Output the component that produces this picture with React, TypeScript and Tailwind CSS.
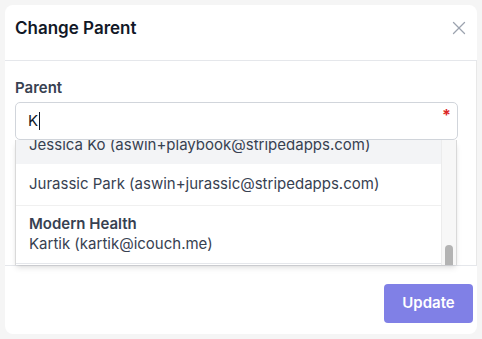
import { X } from 'lucide-react';

const font = { fontFamily: 'Inter, "Noto Sans", sans-serif' };

export default function App() {
  return (
    <div className="h-[339px] w-[482px] bg-[#f5f5f5] p-[5px]" style={font}>
      <div className="flex h-[329px] w-[472px] flex-col overflow-hidden rounded-lg bg-white">
        {/* header */}
        <div className="flex h-[56px] shrink-0 items-start justify-between border-b border-[#e5e7eb] pl-[10px] pr-[7px] pt-[11px]">
          <h2 className="text-[17px] font-semibold leading-[24px] text-[#111827]">Change Parent</h2>
          <X className="mt-[1px] h-[22px] w-[22px] text-[#9ca3af]" strokeWidth={1.4} />
        </div>

        {/* body */}
        <div className="relative h-[204px] shrink-0 border-r border-[#e8e8e8] pl-[10px] pr-[18px]">
          <label className="mt-[17px] block text-[15px] font-semibold leading-[20px] text-[#374151]">Parent</label>
          <div className="relative mt-[4px] flex h-[38px] items-center rounded-[5px] border border-[#d1d5db] px-[12px]">
            <span className="text-[15px] text-[#111827]">K</span>
            <span className="ml-[1px] h-[18px] w-px bg-[#111827]" />
            <span className="absolute right-[6px] top-[4px] text-[16px] font-bold leading-none text-[#dc2626]">*</span>
          </div>

          {/* dropdown */}
          <div className="absolute left-[10px] top-[79px] flex h-[125px] w-[442px] border-x border-[#d9d9d9] bg-white shadow-md">
            <div className="flex-1 overflow-hidden text-[15px] text-[#374151]">
              <div className="-mt-[14px] flex h-[38px] items-center bg-[#f3f4f6] px-[13px]">
                Jessica Ko (aswin+playbook@stripedapps.com)
              </div>
              <div className="flex h-[42px] items-center border-b border-[#f0f0f0] px-[13px]">
                Jurassic Park (aswin+jurassic@stripedapps.com)
              </div>
              <div className="border-b border-[#e5e7eb] px-[13px] pb-[9px] pt-[8px] leading-[20px]">
                <div className="font-semibold">Modern Health</div>
                <div>Kartik (kartik@icouch.me)</div>
              </div>
            </div>
            <div className="relative w-[15px] border-l border-[#ececec] bg-[#f7f7f7]">
              <div className="absolute bottom-[0px] left-[3px] h-[20px] w-[8px] rounded-t-full bg-[#b3b3b3]" />
            </div>
          </div>
        </div>

        {/* footer */}
        <div className="flex flex-1 items-start justify-end border-t border-[#e5e7eb] pr-[4px] pt-[18px]">
          <button className="h-[39px] w-[89px] rounded-[4px] bg-[#8080e6] text-[15px] font-semibold text-white">
            Update
          </button>
        </div>
      </div>
    </div>
  );
}
